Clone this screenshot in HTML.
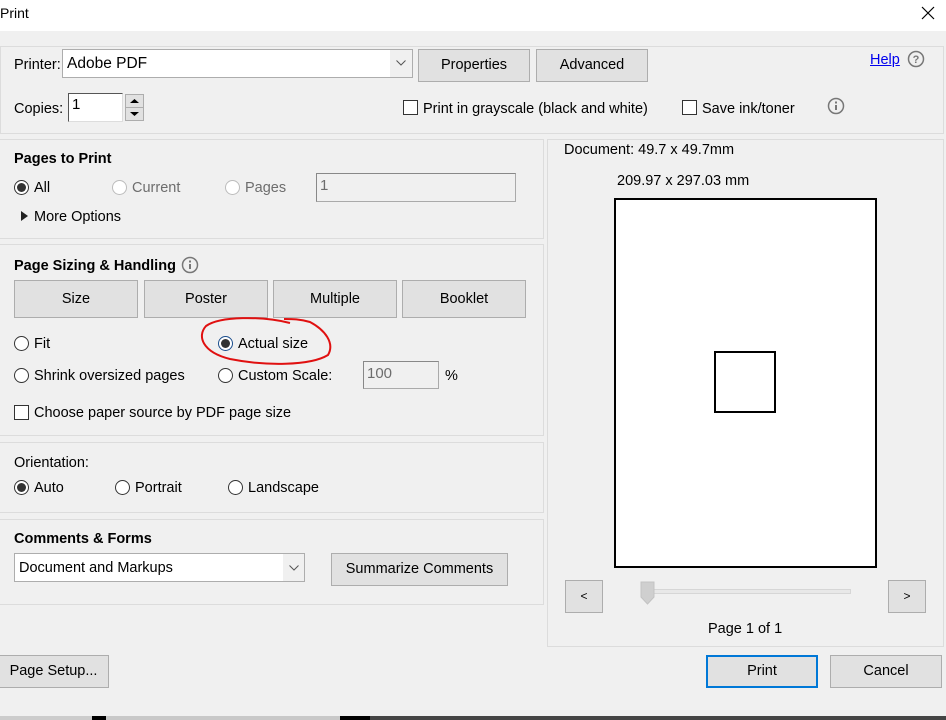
<!DOCTYPE html>
<html><head><meta charset="utf-8"><style>
*{box-sizing:border-box;margin:0;padding:0}
body{width:946px;height:720px;background:#f0f0f0;font-family:"Liberation Sans",sans-serif;font-size:14.5px;color:#000;position:relative;overflow:hidden}
.a{position:absolute;white-space:nowrap}
.panel{position:absolute;border:1px solid #dcdcdc}
.btn{position:absolute;background:#e1e1e1;border:1px solid #adadad;text-align:center;font-size:14.5px}
.rad{position:absolute;width:15px;height:15px;border:1px solid #333;border-radius:50%;background:#fff}
.rad.on::after{content:"";position:absolute;left:2px;top:2px;width:9px;height:9px;border-radius:50%;background:#333}
.rad.dis{border-color:#bcbcbc}
.chk{position:absolute;width:15px;height:15px;border:1px solid #333;background:#fff}
.gray{color:#6d6d6d}
b{font-weight:bold}
</style></head><body>
<div class="a" style="left:0;top:0;width:946px;height:31px;background:#fff"></div>
<div class="a" style="left:0;top:5px;font-size:14px">Print</div>
<svg class="a" style="left:921px;top:6px" width="14" height="14"><path d="M1 1L13 13M13 1L1 13" stroke="#000" stroke-width="1.2"/></svg>

<div class="panel" style="left:0;top:46px;width:944px;height:88px"></div>
<div class="a" style="left:14px;top:57px">Printer:</div>
<div class="a" style="left:62px;top:49px;width:351px;height:29px;border:1px solid #adadad;background:#fff"></div>
<div class="a" style="left:390px;top:50px;width:22px;height:27px;background:#f0f0f0"></div>
<svg class="a" style="left:396px;top:60px" width="10" height="6"><path d="M0.5 0.5L5 5L9.5 0.5" stroke="#555" fill="none"/></svg>
<div class="a" style="left:67px;top:55px;font-size:15.5px">Adobe PDF</div>
<div class="btn" style="left:418px;top:49px;width:112px;height:33px;line-height:31px">Properties</div>
<div class="btn" style="left:536px;top:49px;width:112px;height:33px;line-height:31px">Advanced</div>
<div class="a" style="left:870px;top:52px;color:#0000ee;text-decoration:underline">Help</div>
<svg class="a" style="left:907px;top:50px" width="18" height="18"><circle cx="9" cy="9" r="7.5" fill="none" stroke="#777" stroke-width="1.5"/><text x="9" y="13" font-size="11" font-family="Liberation Sans" text-anchor="middle" fill="#777" font-weight="bold">?</text></svg>

<div class="a" style="left:14px;top:101px">Copies:</div>
<div class="a" style="left:68px;top:93px;width:55px;height:29px;border:1px solid #555;border-right-color:#ddd;border-bottom-color:#ddd;background:#fff;padding:2px 3px;font-size:15px">1</div>
<div class="a" style="left:125px;top:94px;width:19px;height:27px;border:1px solid #adadad;background:#e1e1e1"></div>
<div class="a" style="left:126px;top:107px;width:17px;height:1px;background:#adadad"></div>
<svg class="a" style="left:130px;top:98px" width="9" height="20"><path d="M0 5L4.5 1L9 5Z M0 14L9 14L4.5 18Z" fill="#000"/></svg>
<div class="chk" style="left:403px;top:100px"></div>
<div class="a" style="left:423px;top:101px">Print in grayscale (black and white)</div>
<div class="chk" style="left:682px;top:100px"></div>
<div class="a" style="left:702px;top:101px">Save ink/toner</div>
<svg class="a" style="left:827px;top:97px" width="18" height="18"><circle cx="9" cy="9" r="7.5" fill="none" stroke="#777" stroke-width="1.5"/><rect x="8" y="8" width="2" height="5" fill="#777"/><rect x="8" y="4.5" width="2" height="2" fill="#777"/></svg>

<div class="panel" style="left:-1px;top:139px;width:545px;height:100px"></div>
<div class="a" style="left:14px;top:151px"><b>Pages to Print</b></div>
<div class="rad on" style="left:14px;top:180px"></div><div class="a" style="left:34px;top:180px">All</div>
<div class="rad dis" style="left:112px;top:180px"></div><div class="a gray" style="left:132px;top:180px">Current</div>
<div class="rad dis" style="left:225px;top:180px"></div><div class="a gray" style="left:245px;top:180px">Pages</div>
<div class="a gray" style="left:316px;top:173px;width:200px;height:29px;border:1px solid #aaa;border-top-color:#888;border-left-color:#888;padding:3px;font-size:15px">1</div>
<svg class="a" style="left:21px;top:211px" width="7" height="10"><path d="M0 0L7 5L0 10Z" fill="#222"/></svg>
<div class="a" style="left:34px;top:209px">More Options</div>

<div class="panel" style="left:-1px;top:244px;width:545px;height:192px"></div>
<div class="a" style="left:14px;top:258px"><b>Page Sizing &amp; Handling</b></div>
<svg class="a" style="left:181px;top:256px" width="18" height="18"><circle cx="9" cy="9" r="7.5" fill="none" stroke="#777" stroke-width="1.5"/><rect x="8" y="8" width="2" height="5" fill="#777"/><rect x="8" y="4.5" width="2" height="2" fill="#777"/></svg>
<div class="btn" style="left:14px;top:280px;width:124px;height:38px;line-height:37px">Size</div>
<div class="btn" style="left:144px;top:280px;width:124px;height:38px;line-height:37px">Poster</div>
<div class="btn" style="left:273px;top:280px;width:124px;height:38px;line-height:37px">Multiple</div>
<div class="btn" style="left:402px;top:280px;width:124px;height:38px;line-height:37px">Booklet</div>
<div class="rad" style="left:14px;top:336px"></div><div class="a" style="left:34px;top:336px">Fit</div>
<div class="rad on" style="left:218px;top:336px;border-color:#1a4d8c"></div><div class="a" style="left:238px;top:336px">Actual size</div>
<div class="rad" style="left:14px;top:368px"></div><div class="a" style="left:34px;top:368px">Shrink oversized pages</div>
<div class="rad" style="left:218px;top:368px"></div><div class="a" style="left:238px;top:368px">Custom Scale:</div>
<div class="a gray" style="left:363px;top:361px;width:76px;height:28px;border:1px solid #aaa;border-top-color:#888;border-left-color:#888;padding:3px;font-size:15px">100</div>
<div class="a" style="left:445px;top:368px">%</div>
<div class="chk" style="left:14px;top:405px"></div><div class="a" style="left:34px;top:405px">Choose paper source by PDF page size</div>
<svg class="a" style="left:0;top:0" width="946" height="720"><path d="M290 323C262 316 220 316 206 326C197 336 202 352 230 359C265 366 310 366 328 355C335 343 325 330 310 322C300 319 292 319 284 319" stroke="#e01010" stroke-width="2" fill="none"/></svg>

<div class="panel" style="left:-1px;top:442px;width:545px;height:71px"></div>
<div class="a" style="left:14px;top:455px">Orientation:</div>
<div class="rad on" style="left:14px;top:480px"></div><div class="a" style="left:34px;top:480px">Auto</div>
<div class="rad" style="left:115px;top:480px"></div><div class="a" style="left:135px;top:480px">Portrait</div>
<div class="rad" style="left:228px;top:480px"></div><div class="a" style="left:248px;top:480px">Landscape</div>

<div class="panel" style="left:-1px;top:519px;width:545px;height:86px"></div>
<div class="a" style="left:14px;top:531px"><b>Comments &amp; Forms</b></div>
<div class="a" style="left:14px;top:553px;width:291px;height:29px;border:1px solid #adadad;background:#fff"></div>
<div class="a" style="left:283px;top:554px;width:21px;height:27px;background:#f0f0f0"></div>
<svg class="a" style="left:289px;top:565px" width="10" height="6"><path d="M0.5 0.5L5 5L9.5 0.5" stroke="#555" fill="none"/></svg>
<div class="a" style="left:19px;top:560px">Document and Markups</div>
<div class="btn" style="left:331px;top:553px;width:177px;height:33px;line-height:31px">Summarize Comments</div>

<div class="panel" style="left:547px;top:139px;width:397px;height:508px"></div>
<div class="a" style="left:564px;top:142px">Document: 49.7 x 49.7mm</div>
<div class="a" style="left:617px;top:173px">209.97 x 297.03 mm</div>
<div class="a" style="left:614px;top:198px;width:263px;height:370px;border:2px solid #000;background:#fff"></div>
<div class="a" style="left:714px;top:351px;width:62px;height:62px;border:2px solid #000"></div>
<div class="btn" style="left:565px;top:580px;width:38px;height:33px;line-height:31px;font-size:12px">&lt;</div>
<div class="btn" style="left:888px;top:580px;width:38px;height:33px;line-height:31px;font-size:12px">&gt;</div>
<div class="a" style="left:650px;top:589px;width:201px;height:5px;border:1px solid #d6d6d6;background:#e8e8e8"></div>
<svg class="a" style="left:640px;top:581px" width="16" height="24"><path d="M1 1H14V16L7.5 23L1 16Z" fill="#cfcfcf" stroke="#c3c3c3"/></svg>
<div class="a" style="left:708px;top:621px">Page 1 of 1</div>

<div class="btn" style="left:706px;top:655px;width:112px;height:33px;line-height:29px;border:2px solid #0078d7">Print</div>
<div class="btn" style="left:830px;top:655px;width:112px;height:33px;line-height:31px">Cancel</div>
<div class="btn" style="left:-2px;top:655px;width:111px;height:33px;line-height:31px">Page Setup...</div>

<div class="a" style="left:0;top:716px;width:946px;height:4px;background:#444"></div>
<div class="a" style="left:0;top:716px;width:92px;height:4px;background:#ccc"></div>
<div class="a" style="left:92px;top:716px;width:14px;height:4px;background:#000"></div>
<div class="a" style="left:106px;top:716px;width:234px;height:4px;background:#c8c8c8"></div>
<div class="a" style="left:340px;top:716px;width:30px;height:4px;background:#000"></div>
</body></html>
